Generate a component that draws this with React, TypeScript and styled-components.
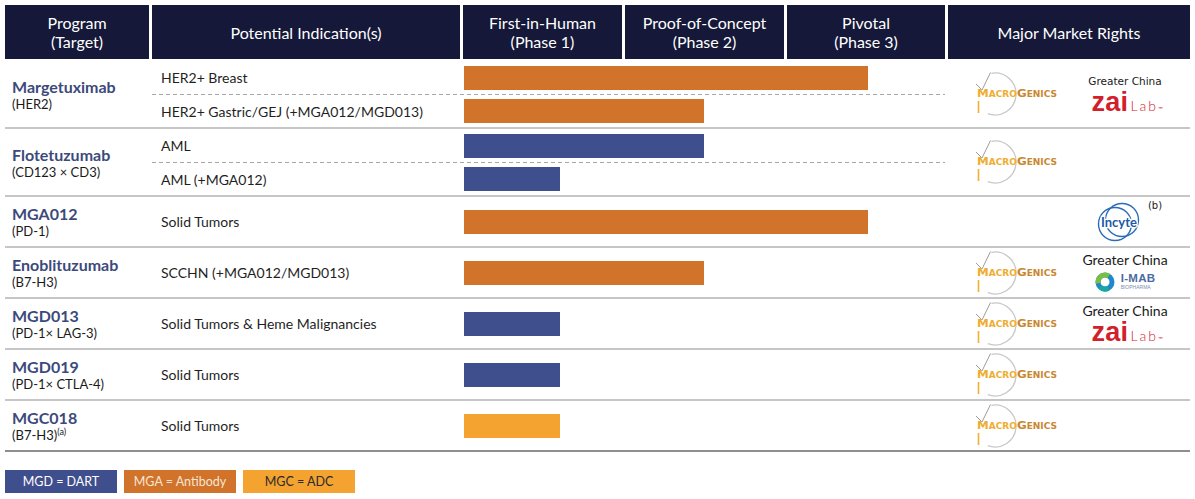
import styled, { createGlobalStyle, css } from "styled-components";

const GlobalStyle = createGlobalStyle`
  * { box-sizing: border-box; }
  body {
    margin: 0;
    background: #fff;
    font-family: Lato, "Open Sans", sans-serif;
  }
`;

const COLS = "144px 308px 159px 159px 158px 242px";

type Kind = "mgd" | "mga" | "mgc";
const barColor: Record<Kind, string> = {
  mgd: "#3f4e8c",
  mga: "#d1732a",
  mgc: "#f4a331",
};

const Page = styled.div`
  width: 1195px;
  padding: 5px 5px 0;
`;

const HeaderRow = styled.div`
  display: grid;
  grid-template-columns: ${COLS};
  column-gap: 3px;
  margin-bottom: 2px;
`;

const HeadCell = styled.div`
  height: 54px;
  background: #151838;
  color: #fff;
  display: flex;
  align-items: center;
  justify-content: center;
  text-align: center;
  font-size: 16px;
  line-height: 19px;
`;

const ProgramRow = styled.div<{ $last?: boolean }>`
  display: grid;
  grid-template-columns: ${COLS};
  column-gap: 3px;
  border-bottom: 2px solid ${(p) => (p.$last ? "#8e8e8e" : "#c6c6c6")};
`;

const ProgramCell = styled.div`
  display: flex;
  flex-direction: column;
  justify-content: center;
  padding-left: 7px;
`;

const Name = styled.div`
  font-weight: 700;
  font-size: 16px;
  line-height: 19px;
  color: #3c4a7b;
`;

const Target = styled.div`
  font-size: 13px;
  line-height: 16px;
  color: #1a1a1a;
  sup {
    font-size: 9px;
    line-height: 0;
  }
`;

const Indications = styled.div`
  grid-column: 2 / 6;
  display: flex;
  flex-direction: column;
`;

const IndicationRow = styled.div<{ $tall: boolean; $dashed: boolean }>`
  display: grid;
  grid-template-columns: 308px 1fr;
  column-gap: 3px;
  align-items: center;
  height: ${(p) => (p.$tall ? 49 : 33)}px;
  ${(p) =>
    p.$dashed &&
    css`
      padding-top: 1px;
      background-image: linear-gradient(to right, #a9a9a9 55%, transparent 55%);
      background-size: 7px 1px;
      background-repeat: repeat-x;
      background-position: left top;
    `}
`;

const Indication = styled.div`
  padding-left: 9px;
  font-size: 14px;
  color: #1f1f1f;
`;

const Bar = styled.div<{ $kind: Kind; $w: number }>`
  height: 24px;
  margin-left: 1px;
  width: ${(p) => p.$w}px;
  background: ${(p) => barColor[p.$kind]};
`;

const RightsCell = styled.div`
  display: flex;
  align-items: center;
  padding-left: 27px;
`;

const MgSlot = styled.div`
  width: 110px;
  display: flex;
  align-items: center;
`;

const PartnerSlot = styled.div`
  width: 80px;
  display: flex;
  flex-direction: column;
  align-items: center;
`;

const Region = styled.div<{ $small?: boolean }>`
  color: #1a1a1a;
  white-space: nowrap;
  ${(p) =>
    p.$small
      ? css`
          font-family: "DejaVu Sans", sans-serif;
          font-size: 10.5px;
          line-height: 14px;
          margin-bottom: 2px;
        `
      : css`
          font-size: 14px;
          line-height: 16px;
          margin-bottom: 1px;
        `}
`;

const Zai = styled.div`
  display: flex;
  align-items: baseline;
  color: #d2202b;
  height: 24px;
  line-height: 24px;
  white-space: nowrap;
  margin-left: 4px;
`;

const ZaiBold = styled.span`
  font-family: "Liberation Sans", sans-serif;
  font-size: 27px;
  font-weight: 700;
  letter-spacing: 0.3px;
`;

const ZaiThin = styled.span`
  font-size: 14px;
  font-weight: 300;
  letter-spacing: 2px;
  margin-left: 2px;
`;

const ZaiMark = styled.span`
  font-size: 6px;
`;

const ImabWrap = styled.div`
  display: flex;
  align-items: center;
  gap: 6px;
  margin-top: 1px;
`;

const ImabText = styled.div`
  display: flex;
  flex-direction: column;
  color: #4c6c9e;
  font-family: "Liberation Sans", sans-serif;
  b {
    font-size: 11.5px;
    line-height: 11px;
    letter-spacing: 0.3px;
  }
  span {
    font-size: 5px;
    line-height: 6px;
    color: #7a90b3;
  }
`;

const IncyteWrap = styled.div`
  display: flex;
  align-items: flex-start;
  margin-left: 6px;
`;

const Sup = styled.span`
  font-family: "DejaVu Sans", sans-serif;
  font-size: 10px;
  color: #222;
  margin-left: 4px;
  margin-top: -2px;
`;

const Legend = styled.div`
  display: flex;
  gap: 7px;
  margin-top: 18px;
`;

const LegendBox = styled.div<{ $kind: Kind }>`
  width: 112px;
  height: 23px;
  display: flex;
  align-items: center;
  justify-content: center;
  font-size: 12.5px;
  background: ${(p) => barColor[p.$kind]};
  color: ${(p) => (p.$kind === "mgd" ? "#fff" : p.$kind === "mga" ? "#f6e6d4" : "#2a2a2a")};
`;

function MacroGenics() {
  return (
    <svg width="86" height="44" viewBox="0 0 86 44">
      <path d="M16.4 1.3 A21 21 0 1 1 12.8 41.7" fill="none" stroke="#c8c8c8" strokeWidth="1.3" />
      <polyline points="1,12 7,18 15.5,0.5" fill="none" stroke="#9c9c9c" strokeWidth="1" />
      <line x1="3.5" y1="29" x2="3.5" y2="41" stroke="#f0b132" strokeWidth="1.6" />
      <text
        x="2"
        y="25"
        textLength="80"
        lengthAdjust="spacingAndGlyphs"
        fontFamily="DejaVu Sans, sans-serif"
        fontWeight="bold"
      >
        <tspan fill="#efad2f" fontSize="10.5">M</tspan>
        <tspan fill="#efad2f" fontSize="8">ACRO</tspan>
        <tspan fill="#c9872f" fontSize="10.5">G</tspan>
        <tspan fill="#c9872f" fontSize="8">ENICS</tspan>
      </text>
    </svg>
  );
}

function ZaiLab() {
  return (
    <Zai>
      <ZaiBold>zai</ZaiBold>
      <ZaiThin>Lab</ZaiThin>
      <ZaiMark>™</ZaiMark>
    </Zai>
  );
}

function Incyte() {
  return (
    <IncyteWrap>
      <svg width="50" height="40" viewBox="0 0 50 40">
        <circle cx="21" cy="22" r="16.5" fill="none" stroke="#2b6db4" strokeWidth="1.4" />
        <circle cx="28" cy="18" r="16.5" fill="none" stroke="#2b6db4" strokeWidth="1.4" />
        <text
          x="25"
          y="24.5"
          textAnchor="middle"
          fontFamily="Lato, sans-serif"
          fontWeight="bold"
          fontSize="13"
          fill="#1c5ba6"
          stroke="#fff"
          strokeWidth="2.5"
          paintOrder="stroke"
        >
          Incyte
        </text>
      </svg>
      <Sup>(b)</Sup>
    </IncyteWrap>
  );
}

function Imab() {
  return (
    <ImabWrap>
      <svg width="20" height="24" viewBox="0 0 20 24">
        <circle cx="10" cy="12" r="7" fill="none" stroke="#1f8acb" strokeWidth="5" />
        <circle
          cx="10"
          cy="12"
          r="7"
          fill="none"
          stroke="#79bf44"
          strokeWidth="5"
          strokeDasharray="16 28"
          transform="rotate(170 10 12)"
        />
        <circle
          cx="10"
          cy="12"
          r="7"
          fill="none"
          stroke="#1aa7a0"
          strokeWidth="5"
          strokeDasharray="9 35"
          transform="rotate(60 10 12)"
        />
      </svg>
      <ImabText>
        <b>I-MAB</b>
        <span>BIOPHARMA</span>
      </ImabText>
    </ImabWrap>
  );
}

type Partner = "zai-small" | "zai" | "incyte" | "imab" | null;

interface Program {
  name: string;
  target: string;
  note?: string;
  items: { text: string; kind: Kind; w: number }[];
  mg: boolean;
  partner: Partner;
}

// bar lengths, measured from the start of the Phase 1 column
const PH1 = 96;
const PH2 = 240;
const PH3 = 404;

const programs: Program[] = [
  {
    name: "Margetuximab",
    target: "(HER2)",
    items: [
      { text: "HER2+ Breast", kind: "mga", w: PH3 },
      { text: "HER2+ Gastric/GEJ (+MGA012/MGD013)", kind: "mga", w: PH2 },
    ],
    mg: true,
    partner: "zai-small",
  },
  {
    name: "Flotetuzumab",
    target: "(CD123 × CD3)",
    items: [
      { text: "AML", kind: "mgd", w: PH2 },
      { text: "AML (+MGA012)", kind: "mgd", w: PH1 },
    ],
    mg: true,
    partner: null,
  },
  {
    name: "MGA012",
    target: "(PD-1)",
    items: [{ text: "Solid Tumors", kind: "mga", w: PH3 }],
    mg: false,
    partner: "incyte",
  },
  {
    name: "Enoblituzumab",
    target: "(B7-H3)",
    items: [{ text: "SCCHN (+MGA012/MGD013)", kind: "mga", w: PH2 }],
    mg: true,
    partner: "imab",
  },
  {
    name: "MGD013",
    target: "(PD-1× LAG-3)",
    items: [{ text: "Solid Tumors & Heme Malignancies", kind: "mgd", w: PH1 }],
    mg: true,
    partner: "zai",
  },
  {
    name: "MGD019",
    target: "(PD-1× CTLA-4)",
    items: [{ text: "Solid Tumors", kind: "mgd", w: PH1 }],
    mg: true,
    partner: null,
  },
  {
    name: "MGC018",
    target: "(B7-H3)",
    note: "(a)",
    items: [{ text: "Solid Tumors", kind: "mgc", w: PH1 }],
    mg: true,
    partner: null,
  },
];

function PartnerLogo({ partner }: { partner: Partner }) {
  if (partner === "zai-small")
    return (
      <>
        <Region $small>Greater China</Region>
        <ZaiLab />
      </>
    );
  if (partner === "zai")
    return (
      <>
        <Region>Greater China</Region>
        <ZaiLab />
      </>
    );
  if (partner === "imab")
    return (
      <>
        <Region>Greater China</Region>
        <Imab />
      </>
    );
  if (partner === "incyte") return <Incyte />;
  return null;
}

export default function App() {
  return (
    <>
      <GlobalStyle />
      <Page>
        <HeaderRow>
          <HeadCell>
            Program
            <br />
            (Target)
          </HeadCell>
          <HeadCell>Potential Indication(s)</HeadCell>
          <HeadCell>
            First-in-Human
            <br />
            (Phase 1)
          </HeadCell>
          <HeadCell>
            Proof-of-Concept
            <br />
            (Phase 2)
          </HeadCell>
          <HeadCell>
            Pivotal
            <br />
            (Phase 3)
          </HeadCell>
          <HeadCell>Major Market Rights</HeadCell>
        </HeaderRow>

        {programs.map((p, idx) => (
          <ProgramRow key={p.name} $last={idx === programs.length - 1}>
            <ProgramCell>
              <Name>{p.name}</Name>
              <Target>
                {p.target}
                {p.note && <sup>{p.note}</sup>}
              </Target>
            </ProgramCell>
            <Indications>
              {p.items.map((it, i) => (
                <IndicationRow key={it.text} $tall={p.items.length === 1} $dashed={i > 0}>
                  <Indication>{it.text}</Indication>
                  <Bar $kind={it.kind} $w={it.w} />
                </IndicationRow>
              ))}
            </Indications>
            <RightsCell>
              <MgSlot>{p.mg && <MacroGenics />}</MgSlot>
              <PartnerSlot>
                <PartnerLogo partner={p.partner} />
              </PartnerSlot>
            </RightsCell>
          </ProgramRow>
        ))}

        <Legend>
          <LegendBox $kind="mgd">MGD = DART</LegendBox>
          <LegendBox $kind="mga">MGA = Antibody</LegendBox>
          <LegendBox $kind="mgc">MGC = ADC</LegendBox>
        </Legend>
      </Page>
    </>
  );
}
